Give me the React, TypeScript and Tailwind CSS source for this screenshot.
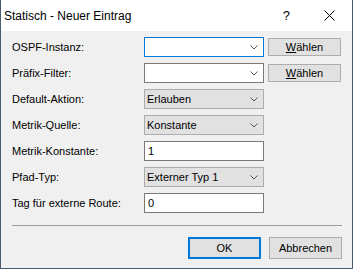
import React from "react";

const font = { fontFamily: '"Liberation Sans", Arial, sans-serif' };

function Chevron() {
  return (
    <svg width="8" height="5" viewBox="0 0 8 5" className="shrink-0">
      <polyline points="0.5,0.5 4,4 7.5,0.5" fill="none" stroke="#555" strokeWidth="1" />
    </svg>
  );
}

function Combo({ value, editable, focused }: { value?: string; editable?: boolean; focused?: boolean }) {
  const cls = editable
    ? focused
      ? "bg-white border-[#0078d7]"
      : "bg-white border-[#7a7a7a]"
    : "bg-[#e1e1e1] border-[#adadad]";
  return (
    <div className={`w-[120px] h-[20px] border ${cls} flex items-center pl-[2px] pr-[5px]`}>
      <span className="flex-1 text-[11px] leading-none text-black">{value}</span>
      <Chevron />
    </div>
  );
}

function TextBox({ value }: { value: string }) {
  return (
    <div className="w-[120px] h-[20px] border border-[#7a7a7a] bg-white flex items-center pl-[3px]">
      <span className="text-[11px] leading-none text-black">{value}</span>
    </div>
  );
}

function Btn({ children, primary, h = "h-[18px]" }: { children: React.ReactNode; primary?: boolean; h?: string }) {
  return (
    <div
      className={`w-[73px] ${h} bg-[#e1e1e1] flex items-center justify-center text-[11px] leading-none text-black ${
        primary ? "border-2 border-[#0078d7]" : "border border-[#adadad]"
      }`}
    >
      {children}
    </div>
  );
}

function Row({ label, children }: { label: string; children: React.ReactNode }) {
  return (
    <div className="flex items-center h-[20px]">
      <div className="w-[132px] text-[11px] leading-none text-black">{label}</div>
      {children}
    </div>
  );
}

export default function App() {
  const wahlen = (
    <span>
      <span className="underline">W</span>ählen
    </span>
  );
  return (
    <div style={font} className="w-[353px] h-[269px] flex flex-col border-x border-b border-[#4a5d70] bg-[#f0f0f0]">
      <div className="h-[31px] bg-white flex items-center shrink-0">
        <span className="ml-[3px] text-[12px] text-black flex-1">Statisch - Neuer Eintrag</span>
        <span className="text-[13px] text-black mr-[34px]">?</span>
        <svg width="11" height="11" viewBox="0 0 11 11" className="mr-[17px]">
          <line x1="0.5" y1="0.5" x2="10.5" y2="10.5" stroke="#000" strokeWidth="1" />
          <line x1="10.5" y1="0.5" x2="0.5" y2="10.5" stroke="#000" strokeWidth="1" />
        </svg>
      </div>
      <div className="flex flex-col pl-[11px] pr-[10px] pt-[6px]">
        <div className="flex flex-col gap-[6px]">
          <Row label="OSPF-Instanz:">
            <Combo editable focused />
            <div className="ml-[4px]">
              <Btn>{wahlen}</Btn>
            </div>
          </Row>
          <Row label="Präfix-Filter:">
            <Combo editable />
            <div className="ml-[4px]">
              <Btn>{wahlen}</Btn>
            </div>
          </Row>
          <Row label="Default-Aktion:">
            <Combo value="Erlauben" />
          </Row>
          <Row label="Metrik-Quelle:">
            <Combo value="Konstante" />
          </Row>
          <Row label="Metrik-Konstante:">
            <TextBox value="1" />
          </Row>
          <Row label="Pfad-Typ:">
            <Combo value="Externer Typ 1" />
          </Row>
          <Row label="Tag für externe Route:">
            <TextBox value="0" />
          </Row>
        </div>
        <div className="mt-[12px] h-px bg-[#a0a0a0]" />
        <div className="mt-[11px] flex justify-end gap-[8px]">
          <Btn primary h="h-[22px]">OK</Btn>
          <Btn h="h-[22px]">Abbrechen</Btn>
        </div>
      </div>
    </div>
  );
}
